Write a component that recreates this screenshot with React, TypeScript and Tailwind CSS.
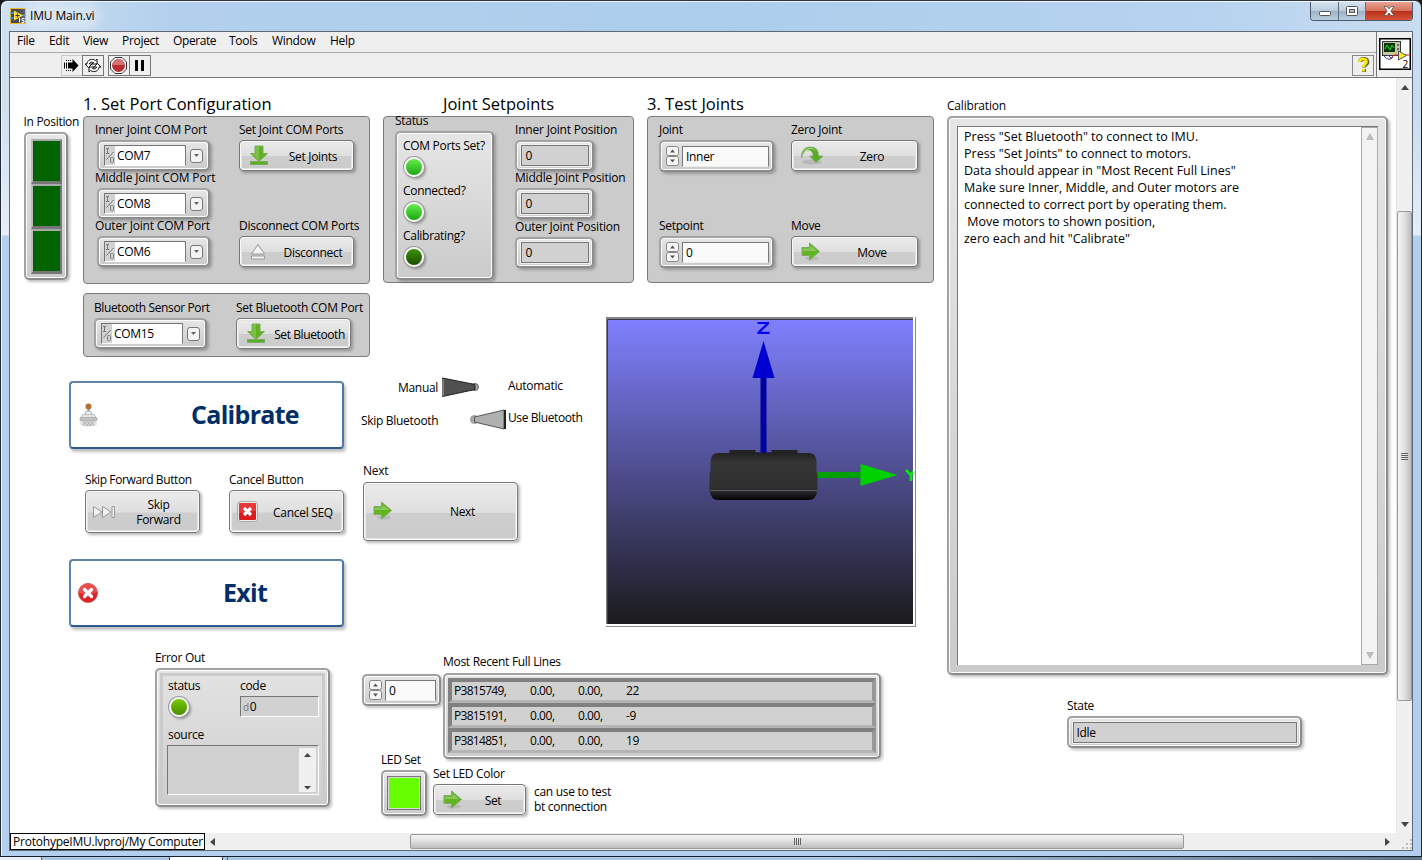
import React from "react";

type Kids = { children?: React.ReactNode; className?: string };

const Label = ({ children, className = "" }: Kids) => (
  <div className={`h-4 shrink-0 whitespace-nowrap leading-4 ${className}`}>{children}</div>
);

/* Raised silver frame used by every control and indicator. */
const Frame = ({ children, className = "" }: Kids) => (
  <div
    className={`shrink-0 rounded-[5px] border-2 border-[#a2a2a2] border-b-[#8c8c8c] border-r-[#8c8c8c] bg-gradient-to-b from-[#e6e6e6] to-[#cbcbcb] shadow-[inset_0_0_0_1px_#fbfbfb,2px_2px_3px_rgba(0,0,0,0.25)] ${className}`}
  >
    {children}
  </div>
);

const Button = ({ icon, children, className = "" }: Kids & { icon: React.ReactNode }) => (
  <button
    className={`flex shrink-0 items-center rounded-[4px] border border-[#777] bg-[linear-gradient(#ececec_0%,#dedede_52%,#cecece_53%,#cbcbcb_100%)] pl-[9px] shadow-[inset_0_0_0_1px_#fafafa,inset_0_0_0_2px_#e4e4e4,2px_2px_3px_rgba(0,0,0,0.28)] ${className}`}
  >
    <span className="flex w-[26px] shrink-0 items-center">{icon}</span>
    <span className="flex-1 pt-px text-center leading-[15px]">{children}</span>
  </button>
);

const Panel = ({ children, className = "" }: Kids) => (
  <div className={`flex shrink-0 rounded-[4px] border border-[#7b7b7b] bg-[#cbcbcb] ${className}`}>{children}</div>
);

const sunken = "border border-[#777] border-r-white border-b-white";

const ComSelect = ({ value }: { value: string }) => (
  <Frame className="flex h-[31px] w-[113px] items-center pl-[5px]">
    <div className="flex h-[21px] w-[82px] border border-[#777] border-b-white bg-white">
      <svg width="10" height="19" viewBox="0 0 10 19" className="shrink-0 bg-[#d2d2d2]">
        <path d="M1 2.500h3M2.500 2.500v5M1 7.500h3M1.500 13.500L8.500 6" stroke="#777" fill="none" />
        <rect x="5.500" y="11.500" width="3" height="5" rx="1" stroke="#777" fill="none" />
      </svg>
      <span className="pl-[2px] leading-5">{value}</span>
    </div>
    <div className="ml-[4px] flex h-[14px] w-[13px] items-center justify-center rounded-[3px] border border-[#777] bg-[#f4f4f4]">
      <svg width="5" height="3" viewBox="0 0 5 3"><path d="M0 0h5L2.500 3z" fill="#666" /></svg>
    </div>
  </Frame>
);

const ComField = ({ label, value }: { label: string; value: string }) => (
  <div className="h-[48px]">
    <Label className="tracking-[-0.18px]">{label}</Label>
    <div className="ml-[2px] mt-[2px]"><ComSelect value={value} /></div>
  </div>
);

const Readout = ({ label }: { label: string }) => (
  <div>
    <Label className="tracking-[-0.2px]">{label}</Label>
    <Frame className="mt-[2px] flex h-[31px] w-[79px] items-center justify-center">
      <div className="h-[21px] w-[68px] border border-[#777] bg-[#d1d1d1] pl-[4px] leading-5 shadow-[0_0_0_1px_#f0f0f0]">0</div>
    </Frame>
  </div>
);

const Spinner = () => (
  <svg width="13" height="21" viewBox="0 0 13 21">
    <rect x="0.500" y="0.500" width="12" height="9" rx="2" fill="#f5f5f5" stroke="#858585" />
    <rect x="0.500" y="10.500" width="12" height="9" rx="2" fill="#f5f5f5" stroke="#858585" />
    <path d="M4 6.500h5L6.500 3.500zM4 13.500h5L6.500 16.500z" fill="#555" />
  </svg>
);

const Stepper = ({ value, className = "" }: { value: string; className?: string }) => (
  <Frame className={`flex h-[32px] items-center pl-[5px] pr-[3px] ${className}`}>
    <Spinner />
    <div className="ml-[3px] h-[21px] flex-1 border border-[#777] border-b-[#eee] bg-[#fafafa] pl-[3px] leading-[19px]">{value}</div>
  </Frame>
);

const Led = ({ className }: { className: string }) => (
  <div className={`h-[20px] w-[20px] shrink-0 rounded-full border-2 border-[#f4f4f4] shadow-[0_0_0_1px_#999,2px_2px_3px_rgba(0,0,0,0.35)] ${className}`} />
);

const DownArrow = () => (
  <svg width="20" height="21" viewBox="0 0 20 21">
    <path d="M6 1h8v7.500h4.500L10 16.500 1.500 8.500H6z" fill="#5fb022" stroke="#7fae5a" />
    <path d="M6.500 1.500h3.500v14L3 9h3.500z" fill="#8ccb5a" opacity=".6" />
    <rect x="1.500" y="16.500" width="17" height="3" fill="#5cae23" stroke="#80a865" />
  </svg>
);

const RightArrow = () => (
  <svg width="20" height="20" viewBox="0 0 20 20">
    <ellipse cx="11" cy="16.500" rx="7" ry="2" fill="#999" opacity=".35" />
    <path d="M1 5.500h7.500V1L18.500 9.500 8.500 18v-4.500H1z" fill="#60b621" stroke="#83a864" />
    <path d="M2 6.500h7.500V3.500L16 9H2z" fill="#a0cf7b" opacity=".65" />
  </svg>
);

const TurnArrow = () => (
  <svg width="23" height="20" viewBox="0 0 23 20">
    <ellipse cx="11" cy="16" rx="10" ry="2.500" fill="#999" opacity=".4" />
    <path d="M0.500 12C0 4 5 1 9 1c6 0 8.500 3 8.500 9H22l-7 6.500L8.500 10H12C12 6 10 4 7 4 4 4 1.500 7 .5 12z" fill="#5aac25" stroke="#84a96b" strokeWidth=".8" />
    <path d="M1.500 9C3 4 5 2 9 2c4 0 6 2 7 4C13 2 6 1 1.500 9z" fill="#a8d584" />
  </svg>
);

const Eject = () => (
  <svg width="18" height="18" viewBox="0 0 18 18">
    <path d="M9 1.500L15.500 11h-13zM2.500 13h13v3h-13z" fill="#f4f4f4" stroke="#999" />
  </svg>
);

const SkipIcon = () => (
  <svg width="24" height="14" viewBox="0 0 24 14">
    <path d="M1.500 1.500L10 7l-8.500 5.500zM10.500 1.500L19 7l-8.500 5.500zM20 1.500h2.500v11H20z" fill="#f2f2f2" stroke="#999" />
  </svg>
);

const CancelIcon = () => (
  <svg width="22" height="22" viewBox="0 0 22 22">
    <rect x=".5" y=".5" width="20" height="20" rx="3" fill="#eee" stroke="#aaa" />
    <rect x="2" y="2" width="17" height="17" rx="1" fill="#dc1c1c" />
    <path d="M2 2h17v8L2 12z" fill="#ef4b4b" opacity=".6" />
    <path d="M7 7l7 7M14 7l-7 7" stroke="#fff" strokeWidth="3.200" />
  </svg>
);

const ExitIcon = () => (
  <svg width="20" height="20" viewBox="0 0 20 20">
    <circle cx="10" cy="10" r="9.500" fill="#dc2024" stroke="#cf5555" />
    <path d="M1 10a9 9 0 0118-1Q11 13 1 10z" fill="#f36a6a" opacity=".6" />
    <path d="M6.500 6.500l7 7M13.500 6.500l-7 7" stroke="#fff" strokeWidth="3.400" strokeLinecap="round" />
  </svg>
);

const StampIcon = () => (
  <svg width="19" height="24" viewBox="0 0 19 24">
    <ellipse cx="9.500" cy="20.500" rx="9" ry="3" fill="#e2e2e2" />
    <path d="M4 19.500h11v3H4z" fill="#aaa" />
    <path d="M4.500 20l1.500 2 2-2 1.500 2 2-2 1.500 2 1.500-2" stroke="#eee" strokeWidth=".8" fill="none" />
    <rect x="8.500" y="5" width="2" height="6" fill="#a9a29c" />
    <path d="M6.500 12V9.500q0-1.500 3-1.500t3 1.500V12" fill="#eee" stroke="#999" strokeWidth=".8" />
    <path d="M3.500 11.500h12l2 4H1.500z" fill="#e6e6e6" stroke="#b5b5b5" strokeWidth=".8" />
    <rect x="1" y="14.500" width="17" height="3.500" rx="1" fill="#c2c2c2" stroke="#999" strokeWidth=".6" />
    <circle cx="9.500" cy="3.500" r="3" fill="#b96b36" />
  </svg>
);

const BigButton = ({ icon, children, className = "" }: Kids & { icon: React.ReactNode }) => (
  <button
    className={`flex h-[68px] w-[275px] shrink-0 items-center rounded-[4px] border-2 border-[#5f83ad] border-b-[#2e5b90] border-r-[#4f76a4] bg-white pl-[7px] text-[25px] font-bold tracking-[-0.7px] text-[#002e66] shadow-[2px_3px_3px_rgba(0,0,0,0.25)] ${className}`}
  >
    <span className="flex w-[20px] shrink-0 justify-center">{icon}</span>
    <span className="ml-[50px] flex-1 text-center">{children}</span>
  </button>
);

const Scene = () => (
  <div className="flex h-[310px] w-[310px] border-b border-r border-[#8a8a8a] pb-[2px] pr-[2px]">
    <div className="flex-1 border-l border-t-2 border-[#858585]">
      <svg width="306" height="305" viewBox="607.500 319 306 305">
        <defs>
          <linearGradient id="sky" x1="0" y1="0" x2="0" y2="1">
            <stop offset="0" stopColor="#8080ff" />
            <stop offset="1" stopColor="#1b1b1d" />
          </linearGradient>
          <linearGradient id="body" x1="0" y1="0" x2="0" y2="1">
            <stop offset="0" stopColor="#222" />
            <stop offset=".2" stopColor="#353535" />
            <stop offset=".75" stopColor="#2f2f2f" />
            <stop offset=".85" stopColor="#222226" />
            <stop offset="1" stopColor="#030303" />
          </linearGradient>
        </defs>
        <rect x="607" y="319" width="307" height="305" fill="url(#sky)" />
        <path d="M608 624V319.500H914" fill="none" stroke="#3a3a48" />
        <path d="M758 323h11.500M758 332.800h12M768.500 323.500L759 332.500" stroke="#0000f0" strokeWidth="2.200" fill="none" />
        <rect x="761" y="376" width="6" height="77" fill="#0000a0" />
        <path d="M764 341L775 378H753z" fill="#0000d0" />
        <path d="M730 453v-3h26v3M772 453v-3h26v3" fill="#222" />
        <path d="M756 453h16" stroke="#151560" strokeWidth="1.500" />
        <rect x="817" y="472" width="46" height="6" fill="#00a000" />
        <path d="M861 464v22L898 475z" fill="#00d000" />
        <path d="M906.500 470l5 5 3-4M911.500 475v6" stroke="#00f000" strokeWidth="2.500" fill="none" />
        <path d="M719 453h90q8 0 8 9v10l1 1v17q-1 10-9 10h-90q-8 0-9-10v-17l1-1v-10q0-9 8-9z" fill="url(#body)" />
        <path d="M711 490.500h107" stroke="#62626a" strokeWidth="1" />
      </svg>
    </div>
  </div>
);

const instructions = [
  'Press "Set Bluetooth" to connect to IMU.',
  'Press "Set Joints" to connect to motors.',
  'Data should appear in "Most Recent Full Lines"',
  "Make sure Inner, Middle, and Outer motors are",
  "connected to correct port by operating them.",
  "\u00a0Move motors to shown position,",
  'zero each and hit "Calibrate"',
];

const lines = [
  ["P3815749,", "0.00,", "0.00,", "22"],
  ["P3815191,", "0.00,", "0.00,", "-9"],
  ["P3814851,", "0.00,", "0.00,", "19"],
];

const Title = ({ children, className = "" }: Kids) => (
  <div className={`h-5 whitespace-nowrap text-[16.5px] leading-5 tracking-normal ${className}`}>{children}</div>
);

const TopRow = () => (
  <div className="flex h-[199px] pl-[13px] pt-[16px]">
    <div className="w-[60px] pt-[20px]">
      <Label className="pl-[0.5px]">In Position</Label>
      <Frame className="ml-px mt-[2px] flex h-[148px] w-[44px] flex-col items-center pt-[5px]">
        {[0, 1, 2].map((i) => (
          <div key={i} className="h-[45px] w-[31px] border-2 border-b-[3px] border-[#777] border-l-[#bbb] border-t-[#aaa] bg-[#006400]" />
        ))}
      </Frame>
    </div>
    <div className="w-[300px]">
      <Title>1. Set Port Configuration</Title>
      <Panel className="mt-[2px] h-[168px] w-[287px] pl-[11px] pt-[5px]">
        <div className="w-[144px]">
          <ComField label="Inner Joint COM Port" value="COM7" />
          <ComField label="Middle Joint COM Port" value="COM8" />
          <ComField label="Outer Joint COM Port" value="COM6" />
        </div>
        <div>
          <Label className="tracking-[-0.25px]">Set Joint COM Ports</Label>
          <Button icon={<DownArrow />} className="mt-[2px] h-[31px] w-[115px] pr-[2px]">Set Joints</Button>
          <Label className="mt-[47px] tracking-[-0.25px]">Disconnect COM Ports</Label>
          <Button icon={<Eject />} className="mt-[2px] h-[31px] w-[115px] pr-[2px]">Disconnect</Button>
        </div>
      </Panel>
    </div>
    <div className="w-[264px]">
      <Title className="pl-[60px]">Joint Setpoints</Title>
      <Panel className="mt-[2px] h-[167px] w-[251px] pl-[11px]">
        <div className="w-[120px]">
          <Label className="-mt-[4px]">Status</Label>
          <Frame className="mt-[2px] h-[149px] w-[99px] px-[6px] pt-[5px]">
            {[
              ["COM Ports Set?", "bg-gradient-to-b from-[#62ee4c] to-[#18a80a]"],
              ["Connected?", "bg-gradient-to-b from-[#62ee4c] to-[#18a80a]"],
              ["Calibrating?", "bg-gradient-to-b from-[#3d9407] to-[#1d4d02]"],
            ].map(([name, tone]) => (
              <div key={name} className="h-[45px]">
                <Label>{name}</Label>
                <Led className={`ml-px mt-[3px] ${tone}`} />
              </div>
            ))}
          </Frame>
        </div>
        <div className="pt-[5px]">
          <div className="h-[48px]"><Readout label="Inner Joint Position" /></div>
          <div className="h-[49px]"><Readout label="Middle Joint Position" /></div>
          <Readout label="Outer Joint Position" />
        </div>
      </Panel>
    </div>
    <div>
      <Title>3. Test Joints</Title>
      <Panel className="mt-[2px] h-[167px] w-[287px] pl-[11px] pt-[5px]">
        <div className="w-[132px]">
          <Label>Joint</Label>
          <Stepper value="Inner" className="mt-[2px] w-[115px]" />
          <Label className="mt-[46px]">Setpoint</Label>
          <Stepper value="0" className="mt-[2px] w-[115px]" />
        </div>
        <div>
          <Label>Zero Joint</Label>
          <Button icon={<TurnArrow />} className="mt-[2px] h-[31px] w-[127px]">Zero</Button>
          <Label className="mt-[47px]">Move</Label>
          <Button icon={<RightArrow />} className="mt-[2px] h-[31px] w-[127px]">Move</Button>
        </div>
      </Panel>
    </div>
  </div>
);

const Switches = () => (
  <div className="pl-[17px]">
    <div className="flex h-[21px]">
      <Label className="w-[80px] pl-[37px] pt-[3px]">Manual</Label>
      <svg width="67" height="21" viewBox="0 0 67 21">
        <circle cx="34" cy="10" r="3.500" fill="#aaa" stroke="#666" />
        <path d="M1.500 1L34 7.500v5L1.500 19.500z" fill="#505050" stroke="#222" />
        <path d="M2 2v17" stroke="#bbb" />
      </svg>
      <Label className="pt-px">Automatic</Label>
    </div>
    <div className="mt-[11px] flex h-[21px]">
      <Label className="w-[109px] pt-[4px]">Skip Bluetooth</Label>
      <svg width="38" height="21" viewBox="0 0 38 21">
        <circle cx="4.500" cy="10.500" r="4" fill="#aaa" stroke="#999" />
        <path d="M4.500 8L34 1v19L4.500 13z" fill="#b0b0b0" stroke="#555" />
        <path d="M35 1v19" stroke="#222" strokeWidth="2" />
      </svg>
      <Label className="pt-[1px] tracking-[-0.4px]">Use Bluetooth</Label>
    </div>
  </div>
);

const MiddleRow = () => (
  <div className="flex h-[357px] pt-[16px]">
    <div className="w-[596px]">
      <Panel className="ml-[73px] h-[64px] w-[287px] pl-[10px] pt-[6px]">
        <div className="w-[142px]">
          <Label className="tracking-[-0.38px]">Bluetooth Sensor Port</Label>
          <div className="mt-[2px]"><ComSelect value="COM15" /></div>
        </div>
        <div>
          <Label>Set Bluetooth COM Port</Label>
          <Button icon={<DownArrow />} className="mt-[2px] h-[31px] w-[115px] pr-[3px] tracking-[-0.4px]">Set Bluetooth</Button>
        </div>
      </Panel>
      <div className="ml-[59px] mt-[20px] flex h-[82px]">
        <BigButton icon={<StampIcon />} className="mt-[4px]">Calibrate</BigButton>
        <Switches />
      </div>
      <div className="flex h-[100px] pl-[75px] pt-[4px]">
        <div className="w-[144px] pt-[9px]">
          <Label className="tracking-[-0.4px]">Skip Forward Button</Label>
          <Button icon={<SkipIcon />} className="mt-[2px] h-[43px] w-[115px] !pl-[6px]">Skip<br />Forward</Button>
        </div>
        <div className="w-[134px] pt-[9px]">
          <Label>Cancel Button</Label>
          <Button icon={<CancelIcon />} className="mt-[2px] h-[43px] w-[115px] !pl-[7px]">Cancel SEQ</Button>
        </div>
        <div>
          <Label>Next</Label>
          <Button icon={<RightArrow />} className="mt-[3px] h-[59px] w-[155px] pb-[2px]">
            <span className="ml-[9px]">Next</span>
          </Button>
        </div>
      </div>
      <BigButton icon={<ExitIcon />} className="ml-[59px]">Exit</BigButton>
    </div>
    <div className="pt-[24px]"><Scene /></div>
  </div>
);

const BottomRow = () => (
  <div className="flex pl-[145px] pt-[16px]">
    <div className="w-[207px]">
      <Label>Error Out</Label>
      <Frame className="mt-[2px] h-[139px] w-[175px] p-[3px]">
        <div className="h-full border-[3px] border-[#cbcbcb] bg-gradient-to-b from-[#e2e2e2] to-[#cfcfcf] pl-[4px] pt-[2px]">
          <div className="flex h-[49px]">
            <div className="w-[73px]">
              <Label className="pl-px">status</Label>
              <Led className="ml-[2px] mt-[3px] bg-gradient-to-b from-[#78cc00] to-[#4a8c00]" />
            </div>
            <div>
              <Label>code</Label>
              <div className={`mt-[2px] flex h-[21px] w-[79px] bg-[#d1d1d1] pl-[2px] leading-5 ${sunken}`}>
                <span className="mr-px text-[10px] text-[#777]">d</span>0
              </div>
            </div>
          </div>
          <Label className="pl-px">source</Label>
          <div className={`mt-[2px] flex h-[50px] w-[152px] justify-end bg-[#d1d1d1] p-[2px] ${sunken}`}>
            <svg width="17" height="44" viewBox="0 0 17 44">
              <rect width="17" height="44" fill="#f0f0f0" />
              <path d="M5 9h7L8.500 5zM5 38h7l-3.500 3.500z" fill="#444" />
            </svg>
          </div>
        </div>
      </Frame>
    </div>
    <div className="pt-[4px]">
      <div className="flex h-[105px]">
        <Stepper value="0" className="mt-[20px] w-[79px]" />
        <div className="ml-[2px]">
          <Label>Most Recent Full Lines</Label>
          <Frame className="mt-[3px] h-[86px] w-[438px] p-[3px]">
            {lines.map(([id, a, b, c]) => (
              <div key={id} className="flex h-[25px] border-[4px] border-b-[3px] border-[#989898] border-b-[#b4b4b4] border-l-[#808080] border-t-[#808080] bg-[#d1d1d1] pl-[2px] leading-[18px] tracking-[-0.45px]">
                <span className="w-[76px] tracking-[-0.7px]">{id}</span>
                <span className="w-[48px]">{a}</span>
                <span className="w-[48px]">{b}</span>
                <span>{c}</span>
              </div>
            ))}
          </Frame>
        </div>
      </div>
      <div className="-mt-[7px] flex pl-[19px]">
        <div className="w-[52px]">
          <Label className="tracking-[-0.4px]">LED Set</Label>
          <Frame className="mt-[2px] flex h-[46px] w-[46px] items-center justify-center">
            <div className="h-[34px] w-[34px] border border-[#777] bg-[#66ff00] shadow-[inset_0_0_0_1px_#d8d8d8]" />
          </Frame>
        </div>
        <div className="w-[101px] pt-[14px]">
          <Label>Set LED Color</Label>
          <Button icon={<RightArrow />} className="mt-[2px] h-[31px] w-[93px] pr-[8px]">Set</Button>
        </div>
        <div className="pt-[32px] leading-[15px]">can use to test<br />bt connection</div>
      </div>
    </div>
  </div>
);

const RightColumn = () => (
  <div className="w-[449px] pt-[19px]">
    <Label className="pt-px tracking-[-0.2px]">Calibration</Label>
    <Frame className="mt-[3px] h-[559px] w-[441px] p-[8px]">
      <div className="flex h-full border-l border-t border-[#777] bg-white">
        <div className="flex-1 pl-[6px] pt-px text-[12.5px] leading-[17px] tracking-normal">
          {instructions.map((t) => <div key={t} className="whitespace-nowrap">{t}</div>)}
        </div>
        <div className="flex w-[17px] flex-col items-center justify-between border border-[#aaa] bg-[#f3f3f3] py-[5px]">
          <svg width="8" height="7" viewBox="0 0 8 7"><path d="M0 7h8L4 0z" fill="#bbb" /></svg>
          <svg width="8" height="7" viewBox="0 0 8 7"><path d="M0 0h8L4 7z" fill="#bbb" /></svg>
        </div>
      </div>
    </Frame>
    <div className="ml-[120px] mt-[23px]">
      <Label>State</Label>
      <Frame className="mt-[2px] flex h-[32px] w-[235px] items-center justify-center">
        <div className="h-[21px] w-[224px] border border-[#777] bg-[#d1d1d1] pl-[3px] leading-5 shadow-[0_0_0_1px_#f0f0f0]">Idle</div>
      </Frame>
    </div>
  </div>
);

const VScroll = () => (
  <div className="flex w-[17px] flex-col items-center border-l border-[#e6e6e6] bg-[#f0f0f0]">
    <svg width="8" height="5" viewBox="0 0 8 5" className="mt-[7px]"><path d="M0 5h8L4 0z" fill="#444" /></svg>
    <div className="mt-[121px] flex h-[490px] w-[15px] flex-col items-center justify-center gap-px rounded-[2px] border border-[#999] bg-gradient-to-r from-[#f5f5f5] via-[#e0e0e0] to-[#bdbdc0]">
      {[0, 1, 2, 3].map((i) => <i key={i} className="h-px w-[7px] bg-[#666]" />)}
    </div>
    <svg width="8" height="5" viewBox="0 0 8 5" className="mt-[121px]"><path d="M0 0h8L4 5z" fill="#444" /></svg>
  </div>
);

const HScroll = () => (
  <div className="flex h-[17px] items-center bg-[#efefef]">
    <div className="flex h-[17px] w-[195px] items-center whitespace-nowrap border border-black bg-white pl-[2px] tracking-[-0.22px]">
      ProtohypeIMU.lvproj/My Computer
    </div>
    <svg width="5" height="8" viewBox="0 0 5 8" className="ml-[5px]"><path d="M5 0v8L0 4z" fill="#444" /></svg>
    <div className="ml-[195px] flex h-[15px] w-[774px] items-center justify-center gap-px rounded-[2px] border border-[#999] bg-gradient-to-b from-[#f5f5f5] via-[#dedede] to-[#bdbdc0]">
      {[0, 1, 2, 3].map((i) => <i key={i} className="h-[7px] w-px bg-[#666]" />)}
    </div>
    <svg width="5" height="8" viewBox="0 0 5 8" className="ml-[201px]"><path d="M0 0v8l5-4z" fill="#444" /></svg>
    <svg width="10" height="10" viewBox="0 0 10 10" className="ml-[12px] mt-[5px]">
      <path d="M8 0h2v2H8zM4 4h2v2H4zM8 4h2v2H8zM0 8h2v2H0zM4 8h2v2H4zM8 8h2v2H8z" fill="#c0c0c0" />
    </svg>
  </div>
);

const AppIcon = () => (
  <svg width="16" height="16" viewBox="0 0 16 16">
    <rect x=".5" y=".5" width="15" height="15" fill="#454a50" stroke="#efb62c" />
    <path d="M0 5h4M0 10h4M12 7.500h4" stroke="#3e9ed8" strokeWidth="1.500" />
    <path d="M4 2.500L13 7.500 4 12.500z" fill="#ffd83e" />
    <path d="M5.500 7.500h4M7.500 5.500v4" stroke="#333" />
    <path d="M9.500 10v4.500M14.500 10.500h-2.500v2h2v2h-2.500" stroke="#fff" fill="none" />
  </svg>
);

const TitleBar = () => (
  <div className="flex h-[30px] items-start pl-[9px] pt-px">
    <div className="flex items-center pt-[6px]">
      <AppIcon />
      <span className="ml-[4px] rounded-full bg-white/30 leading-4 tracking-[-0.15px] shadow-[0_0_10px_6px_rgba(255,255,255,0.3)]">IMU Main.vi</span>
    </div>
    <div className="ml-auto mr-[8px] flex h-[19px] overflow-hidden rounded-b-[4px] border border-t-0 border-[#4a5a6c]">
      <div className="flex w-[28px] items-center justify-center border-r border-[#5d6d7e] bg-[linear-gradient(#d6e2ef_0%,#bccbdb_48%,#9db2c8_50%,#b9cde0_100%)]">
        <svg width="12" height="6" viewBox="0 0 12 6" className="mt-[5px]"><rect x=".5" y=".5" width="11" height="4" rx="1" fill="#fff" stroke="#555" /></svg>
      </div>
      <div className="flex w-[27px] items-center justify-center border-r border-[#5d6d7e] bg-[linear-gradient(#d6e2ef_0%,#bccbdb_48%,#9db2c8_50%,#b9cde0_100%)]">
        <svg width="12" height="10" viewBox="0 0 12 10">
          <rect x=".5" y=".5" width="11" height="9" rx="1" fill="#fff" stroke="#555" />
          <rect x="3.500" y="3.500" width="5" height="3" fill="#a9bbcf" stroke="#555" />
        </svg>
      </div>
      <div className="flex w-[46px] items-center justify-center bg-[linear-gradient(#e8a393_0%,#d3735c_48%,#ba2f18_50%,#d2543a_100%)]">
        <svg width="12" height="10" viewBox="0 0 12 10">
          <path d="M1 .5h3L6 3 8 .5h3L7.800 5 11 9.500H8L6 7 4 9.500H1L4.200 5z" fill="#fff" stroke="#555" strokeWidth=".8" />
        </svg>
      </div>
    </div>
  </div>
);

const RunIcon = () => (
  <svg width="20" height="19" viewBox="0 0 20 19">
    <path d="M2.500 6.500v6M4.500 6.500v6" stroke="#000" />
    <path d="M6 6.500h4.500V3l6 6.500-6 6.500v-3.500H6z" fill="#000" />
    <path d="M4 4.500h5M4 14.500h5" stroke="#000" strokeDasharray="1 1" />
  </svg>
);

const LoopIcon = () => (
  <svg width="18" height="17" viewBox="0 0 18 17" fill="#fff" stroke="#111">
    <path d="M3 7C3 3 8 1 11.500 3.500L13 2v5H8l1.500-1.500C7 4.500 5.500 5.500 5.500 7H8L4.500 10.500 1 7z" />
    <path d="M15 10c0 4-5 6-8.500 3.500L5 15v-5h5l-1.500 1.500c2.500 1 4 0 4-1.500H10l3.500-3.500L17 10z" />
  </svg>
);

const Toolbar = () => (
  <div className="flex h-[24px] items-center pl-[51px] pr-[2px]">
    <div className="flex h-[21px] w-[21px] items-center justify-center border border-r-0 border-[#c8c8c8]"><RunIcon /></div>
    <div className="flex h-[21px] w-[22px] items-center justify-center border border-[#777]"><LoopIcon /></div>
    <div className="ml-[4px] flex h-[21px] w-[22px] items-center border border-[#777] pl-px">
      <svg width="17" height="17" viewBox="0 0 17 17">
        <path d="M5 .5h7L16.500 5v7L12 16.500H5L.5 12V5z" fill="#fff" stroke="#333" />
        <circle cx="8.500" cy="8.500" r="6.500" fill="#b92e34" />
        <path d="M2.500 8a6 6 0 0112 0z" fill="#d27276" />
      </svg>
    </div>
    <div className="flex h-[21px] w-[21px] items-center gap-[3px] border border-l-0 border-[#777] pl-[5px]">
      <i className="h-[11px] w-[3px] bg-black" /><i className="h-[11px] w-[3px] bg-black" />
    </div>
    <div className="ml-auto flex h-[21px] w-[22px] items-center justify-center border border-[#888]">
      <svg width="13" height="16" viewBox="0 0 13 16">
        <path d="M3 5C3 1 10.500 1 10.500 5 10.500 7.500 7 7.500 7 10.500M7 12v3" stroke="#66662a" strokeWidth="4" fill="none" />
        <path d="M2.500 5C2.500 1 9.500 1 9.500 4.500 9.500 7 6.500 7 6.500 10M6.500 12v2.500" stroke="#ffee00" strokeWidth="2.600" fill="none" />
      </svg>
    </div>
  </div>
);

const ViIcon = () => (
  <svg width="32" height="32" viewBox="0 0 32 32" className="-mt-[1px]">
    <rect x=".75" y=".75" width="30.500" height="30.500" fill="#fff" stroke="#000" strokeWidth="1.500" />
    <rect x="3.500" y="3.500" width="18" height="14" fill="#c9c7a1" stroke="#333" />
    <rect x="5" y="5" width="11" height="9" fill="#073807" />
    <path d="M6 11l2-4 3 5 2-5 2 3" stroke="#22e022" fill="none" />
    <path d="M18 6h2v2h-2zM18 10h2v2h-2z" fill="#666" />
    <path d="M5 18q5 6 9 1M9 17l3 3" stroke="#223dbb" fill="none" />
    <path d="M11 21l4-4h5M26 17h5" stroke="#e22" fill="none" />
    <path d="M19.500 13v9l8-4.500z" fill="#ffe92b" stroke="#555" />
    <text x="23.500" y="29.500" fontSize="10" fontFamily="Open Sans, sans-serif">2</text>
  </svg>
);

export default function App() {
  return (
    <div className="flex h-[860px] w-[1422px] flex-col overflow-hidden bg-[#18181c] font-['Open_Sans','Noto_Sans',sans-serif] text-[12px] tracking-[-0.3px] text-black">
      <div className="flex h-[857px] flex-col rounded-t-[7px] border border-b-[#15202c] border-l-[#202834] border-r-[#202834] border-t-[#30363e] bg-[linear-gradient(180deg,transparent_0px,transparent_100px,#e4edf7_234px,#b2d0ee_235px),linear-gradient(90deg,#cfe0f1_0%,#b2d0ed_12%,#accdec_50%,#b6d3ef_85%,#c9dcf0_100%)] shadow-[inset_1px_1px_0_#eef5fc]">
        <TitleBar />
        <div className="mx-[8px] flex h-[820px] flex-col border border-[#606a76] bg-[#efefef]">
          <div className="flex h-[46px] shrink-0 border-b border-[#777]">
            <div className="flex-1">
              <div className="flex h-[21px] items-center border-b border-[#aaa] pb-[2px] pl-[7px]">
                <span className="w-[32px]">File</span>
                <span className="w-[34px]">Edit</span>
                <span className="w-[39px]">View</span>
                <span className="w-[51px]">Project</span>
                <span className="w-[56px] tracking-[-0.4px]">Operate</span>
                <span className="w-[43px]">Tools</span>
                <span className="w-[58px]">Window</span>
                <span>Help</span>
              </div>
              <Toolbar />
            </div>
            <div className="flex w-[36px] items-center justify-center border-l border-[#777]"><ViIcon /></div>
          </div>
          <div className="flex h-[755px] shrink-0">
            <div className="flex flex-1 bg-white">
              <div className="w-[937px]">
                <TopRow />
                <MiddleRow />
                <BottomRow />
              </div>
              <RightColumn />
            </div>
            <VScroll />
          </div>
          <HScroll />
        </div>
      </div>
      <div className="flex h-[3px] bg-[#a9c8e4]">
        <div className="w-[42px] border-r border-[#667] bg-[#e8eff6]" />
        <div className="ml-[127px] w-[54px] border-x border-[#445] bg-white" />
        <div className="ml-[4px] flex-1 border-l border-[#667] bg-gradient-to-r from-[#a9c8e4] via-[#a9c8e4] to-[#60758c]" />
      </div>
    </div>
  );
}
